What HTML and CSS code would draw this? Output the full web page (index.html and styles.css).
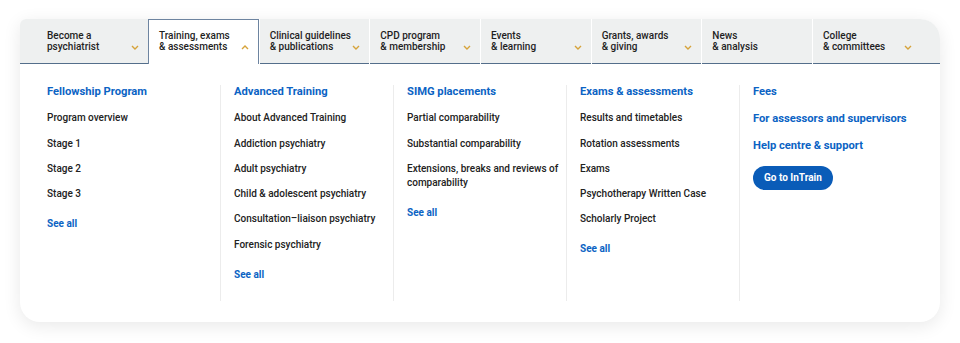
FILE: index.html
```html
<!DOCTYPE html>
<html lang="en">
<head>
    <meta charset="UTF-8">
    <meta name="viewport" content="width=device-width, initial-scale=1.0">
    <title>Training, exams &amp; assessments menu</title>
    <link rel="stylesheet" href="styles.css">
</head>
<body>
    <div class="mega-menu">
        <nav class="tab-bar">
            <a class="tab tab-first" href="#">
                <span class="tab-label">Become a<br>psychiatrist</span>
                <svg class="chevron" width="8" height="5" viewBox="0 0 8 5"><path d="M1 1l3 3 3-3"/></svg>
            </a>
            <a class="tab active" href="#">
                <span class="tab-label">Training, exams<br>&amp; assessments</span>
                <svg class="chevron" width="8" height="5" viewBox="0 0 8 5"><path d="M1 4l3-3 3 3"/></svg>
            </a>
            <a class="tab" href="#">
                <span class="tab-label">Clinical guidelines<br>&amp; publications</span>
                <svg class="chevron" width="8" height="5" viewBox="0 0 8 5"><path d="M1 1l3 3 3-3"/></svg>
            </a>
            <a class="tab" href="#">
                <span class="tab-label">CPD program<br>&amp; membership</span>
                <svg class="chevron" width="8" height="5" viewBox="0 0 8 5"><path d="M1 1l3 3 3-3"/></svg>
            </a>
            <a class="tab" href="#">
                <span class="tab-label">Events<br>&amp; learning</span>
                <svg class="chevron" width="8" height="5" viewBox="0 0 8 5"><path d="M1 1l3 3 3-3"/></svg>
            </a>
            <a class="tab" href="#">
                <span class="tab-label">Grants, awards<br>&amp; giving</span>
                <svg class="chevron" width="8" height="5" viewBox="0 0 8 5"><path d="M1 1l3 3 3-3"/></svg>
            </a>
            <a class="tab" href="#">
                <span class="tab-label">News<br>&amp; analysis</span>
            </a>
            <a class="tab tab-last" href="#">
                <span class="tab-label">College<br>&amp; committees</span>
                <svg class="chevron" width="8" height="5" viewBox="0 0 8 5"><path d="M1 1l3 3 3-3"/></svg>
            </a>
        </nav>

        <div class="menu-panel">
            <div class="menu-col">
                <a class="col-heading" href="#">Fellowship Program</a>
                <ul class="col-links">
                    <li><a href="#">Program overview</a></li>
                    <li><a href="#">Stage 1</a></li>
                    <li><a href="#">Stage 2</a></li>
                    <li><a href="#">Stage 3</a></li>
                </ul>
                <a class="see-all" href="#">See all</a>
            </div>
            <div class="menu-col">
                <a class="col-heading" href="#">Advanced Training</a>
                <ul class="col-links">
                    <li><a href="#">About Advanced Training</a></li>
                    <li><a href="#">Addiction psychiatry</a></li>
                    <li><a href="#">Adult psychiatry</a></li>
                    <li><a href="#">Child &amp; adolescent psychiatry</a></li>
                    <li><a href="#">Consultation–liaison psychiatry</a></li>
                    <li><a href="#">Forensic psychiatry</a></li>
                </ul>
                <a class="see-all" href="#">See all</a>
            </div>
            <div class="menu-col">
                <a class="col-heading" href="#">SIMG placements</a>
                <ul class="col-links">
                    <li><a href="#">Partial comparability</a></li>
                    <li><a href="#">Substantial comparability</a></li>
                    <li><a href="#">Extensions, breaks and reviews of comparability</a></li>
                </ul>
                <a class="see-all" href="#">See all</a>
            </div>
            <div class="menu-col">
                <a class="col-heading" href="#">Exams &amp; assessments</a>
                <ul class="col-links">
                    <li><a href="#">Results and timetables</a></li>
                    <li><a href="#">Rotation assessments</a></li>
                    <li><a href="#">Exams</a></li>
                    <li><a href="#">Psychotherapy Written Case</a></li>
                    <li><a href="#">Scholarly Project</a></li>
                </ul>
                <a class="see-all" href="#">See all</a>
            </div>
            <div class="menu-col">
                <ul class="quick-links">
                    <li><a href="#">Fees</a></li>
                    <li><a href="#">For assessors and supervisors</a></li>
                    <li><a href="#">Help centre &amp; support</a></li>
                </ul>
                <a class="pill-button" href="#">Go to InTrain</a>
            </div>
        </div>
    </div>
</body>
</html>
```

FILE: styles.css
```css
body {
    margin: 0;
    padding: 19px 20px;
    background-color: #ffffff;
    font-family: 'Roboto', 'Liberation Sans', sans-serif;
    color: #222222;
}

a {
    text-decoration: none;
    color: inherit;
}

ul {
    list-style: none;
    margin: 0;
    padding: 0;
}

.mega-menu {
    width: 920px;
    background-color: #ffffff;
    border-radius: 6px 20px 20px 20px;
    box-shadow: 0 4px 18px rgba(0, 0, 0, 0.09);
    overflow: hidden;
}

/* top tabs */
.tab-bar {
    display: grid;
    grid-template-columns: 128px repeat(6, 1fr) 128px;
    height: 44px;
    background-color: #eef0f0;
    border-bottom: 1px solid #546e8b;
}

.tab {
    display: flex;
    align-items: flex-start;
    padding: 11px 9px 0 10px;
    border-left: 1px solid #ffffff;
    color: #1f1f1f;
    font-size: 10px;
    font-weight: 500;
    line-height: 11px;
    white-space: nowrap;
}

.tab-first {
    padding-left: 27px;
    border-left: none;
}

.tab-last {
    padding-right: 28px;
}

.tab.active {
    background-color: #ffffff;
    border: 1px solid #6d84a0;
    border-bottom: none;
    height: 45px;
    padding-top: 10px;
    box-sizing: border-box;
}

.chevron {
    margin-top: 15px;
    margin-left: auto;
    flex-shrink: 0;
}

.chevron path {
    fill: none;
    stroke: #d6a33a;
    stroke-width: 1.4;
}

/* dropdown panel */
.menu-panel {
    display: grid;
    grid-template-columns: repeat(5, 1fr);
    padding: 21px 28px 21px 27px;
}

.menu-col {
    display: flex;
    flex-direction: column;
    align-items: flex-start;
    padding-bottom: 19px;
}

.menu-col + .menu-col {
    border-left: 1px solid #ececec;
    padding-left: 13px;
}

.col-heading {
    color: #0b63c4;
    font-size: 11.2px;
    font-weight: 700;
    line-height: 14px;
}

.col-links {
    margin-top: 1px;
}

.col-links li {
    margin-top: 11.3px;
    font-size: 10px;
    font-weight: 500;
    line-height: 14px;
}

.see-all {
    margin-top: 16px;
    color: #0b63c4;
    font-size: 10px;
    font-weight: 700;
    line-height: 14px;
}

.quick-links li {
    color: #0b63c4;
    font-size: 11.2px;
    font-weight: 700;
    line-height: 14px;
    white-space: nowrap;
}

.quick-links li + li {
    margin-top: 13px;
}

.pill-button {
    margin-top: 13px;
    padding: 0 11px;
    height: 24px;
    line-height: 24px;
    border-radius: 12px;
    background-color: #0a5cb8;
    color: #ffffff;
    font-size: 10px;
    font-weight: 700;
}
```
